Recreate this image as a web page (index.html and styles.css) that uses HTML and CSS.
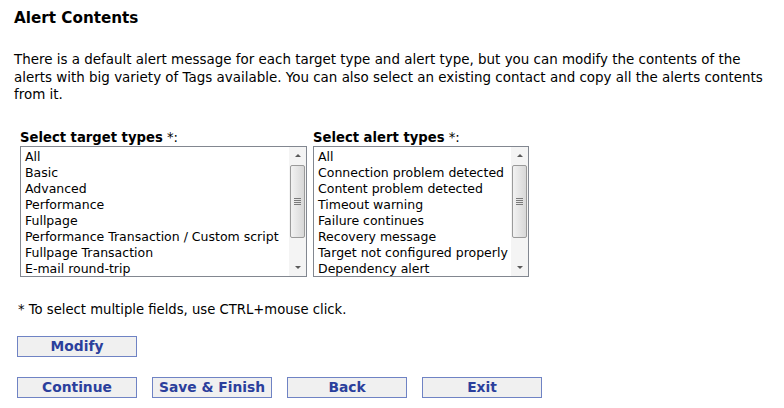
FILE: index.html
```html
<!DOCTYPE html>
<html>
<head>
<meta charset="utf-8">
<link rel="stylesheet" href="styles.css">
</head>
<body>
<div class="page">
  <h1 class="title">Alert Contents</h1>
  <p class="intro">There is a default alert message for each target type and alert type, but you can modify the contents of the<br>alerts with big variety of Tags available. You can also select an existing contact and copy all the alerts contents<br>from it.</p>

  <div class="pickers">
    <div class="picker picker-target">
      <div class="picker-label"><b>Select target types</b> *:</div>
      <div class="listbox">
        <ul class="options">
          <li>All</li>
          <li>Basic</li>
          <li>Advanced</li>
          <li>Performance</li>
          <li>Fullpage</li>
          <li>Performance Transaction / Custom script</li>
          <li>Fullpage Transaction</li>
          <li>E-mail round-trip</li>
        </ul>
        <div class="scrollbar">
          <div class="arrow arrow-up"></div>
          <div class="track"><div class="thumb"><span class="grip"></span></div></div>
          <div class="arrow arrow-down"></div>
        </div>
      </div>
    </div>
    <div class="picker picker-alert">
      <div class="picker-label"><b>Select alert types</b> *:</div>
      <div class="listbox">
        <ul class="options">
          <li>All</li>
          <li>Connection problem detected</li>
          <li>Content problem detected</li>
          <li>Timeout warning</li>
          <li>Failure continues</li>
          <li>Recovery message</li>
          <li>Target not configured properly</li>
          <li>Dependency alert</li>
        </ul>
        <div class="scrollbar">
          <div class="arrow arrow-up"></div>
          <div class="track"><div class="thumb"><span class="grip"></span></div></div>
          <div class="arrow arrow-down"></div>
        </div>
      </div>
    </div>
  </div>

  <p class="hint">* To select multiple fields, use CTRL+mouse click.</p>

  <div class="button-row">
    <button class="btn">Modify</button>
  </div>
  <div class="button-row">
    <button class="btn">Continue</button>
    <button class="btn">Save &amp; Finish</button>
    <button class="btn">Back</button>
    <button class="btn">Exit</button>
  </div>
</div>
</body>
</html>
```
FILE: styles.css
```css
html, body {
  margin: 0;
  padding: 0;
  background: #ffffff;
}

body {
  font-family: "DejaVu Sans", Verdana, sans-serif;
  font-size: 12px;
  color: #000000;
}

.page {
  padding: 8px 0 0 14px;
  width: 770px;
}

.title {
  margin: 0;
  font-size: 15.2px;
  font-weight: bold;
  line-height: 20px;
}

.intro {
  margin: 23px 0 0 0;
  line-height: 17.5px;
  font-size: 13.45px;
  white-space: nowrap;
}

.pickers {
  display: flex;
  gap: 6px;
  margin: 25px 0 0 6px;
}

.picker-label {
  font-size: 13.2px;
  line-height: 17px;
  height: 17px;
}

.picker-label b {
  font-weight: bold;
}

.listbox {
  box-sizing: border-box;
  display: flex;
  border: 1px solid #828790;
  height: 131px;
  background: #fff;
  overflow: hidden;
}

.picker-target .listbox { width: 287px; }
.picker-alert .listbox { width: 216px; }

.options {
  list-style: none;
  margin: 0;
  padding: 2px 0 0 4px;
  flex: 1;
  font-size: 12.5px;
  line-height: 16px;
  white-space: nowrap;
  overflow: hidden;
}

.scrollbar {
  width: 17px;
  display: flex;
  flex-direction: column;
  background: #f4f4f4;
}

.arrow {
  height: 17px;
  position: relative;
}

.arrow::after {
  content: "";
  position: absolute;
  left: 6px;
  width: 0;
  height: 0;
  border-left: 3px solid transparent;
  border-right: 3px solid transparent;
}

.arrow-up::after {
  top: 7px;
  border-bottom: 3px solid #5a5a5a;
}

.arrow-down::after {
  top: 7px;
  border-top: 3px solid #5a5a5a;
}

.track {
  flex: 1;
  padding: 0 1px;
}

.thumb {
  box-sizing: border-box;
  height: 73px;
  margin-top: 1px;
  border: 1px solid #9a9a9a;
  border-radius: 2px;
  background: linear-gradient(to right, #f2f2f2, #e2e2e2 60%, #d8d8d8);
  display: flex;
  align-items: center;
  justify-content: center;
}

.grip {
  width: 7px;
  height: 7px;
  background: repeating-linear-gradient(to bottom, #7a7a7a 0 1px, transparent 1px 2px);
}

.hint {
  margin: 25px 0 0 4px;
  font-size: 13.2px;
  line-height: 16px;
}

.button-row {
  display: flex;
  gap: 15px;
  margin: 18px 0 0 3px;
}

.button-row + .button-row {
  margin-top: 20px;
}

.btn {
  width: 120px;
  height: 21px;
  padding: 0;
  border: 1px solid #6f83c4;
  background: #f0f0f0;
  color: #2b3f9c;
  font-family: "DejaVu Sans", Verdana, sans-serif;
  font-weight: bold;
  font-size: 13.8px;
  line-height: 19px;
  cursor: pointer;
}
```
